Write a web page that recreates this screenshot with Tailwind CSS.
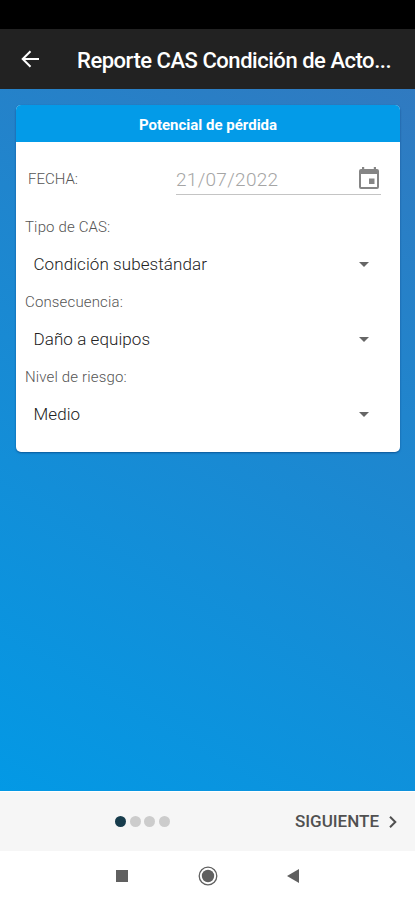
<!DOCTYPE html>
<html lang="es">
<head>
    <meta charset="UTF-8">
    <meta name="viewport" content="width=device-width, initial-scale=1.0">
    <title>Reporte CAS</title>
    <script src="https://cdn.jsdelivr.net/npm/@tailwindcss/browser@4"></script>
</head>
<body class="bg-white font-['Roboto',sans-serif]">

    <div class="w-full h-[900px] flex flex-col overflow-hidden">
        <!-- Status bar -->
        <div class="h-[29px] bg-black shrink-0"></div>

        <header class="h-[60px] bg-[#222222] flex items-center shrink-0 pl-[21px]">
            <svg class="w-[18px] h-[18px] mr-[38px] shrink-0" viewBox="0 0 18 18" fill="none" stroke="#ffffff" stroke-width="2">
                <path d="M18 9H2M9.5 1.2L1.7 9l7.8 7.8"/>
            </svg>
            <h1 class="text-[22px] font-medium text-white whitespace-nowrap pt-[3px] tracking-[-0.47px]">Reporte CAS Condición de Acto...</h1>
        </header>

        <main class="flex-1 px-4 pt-4 bg-[linear-gradient(30deg,#0399e5,#307ac0)]">
            <div class="w-[384px] h-[347px] bg-white rounded-[5px] overflow-hidden shadow-[0_1px_2px_rgba(0,50,110,0.6)]">
                <div class="h-[37px] bg-[#039be8] flex items-center justify-center">
                    <h2 class="text-[15px] font-bold text-white pt-[3px]">Potencial de pérdida</h2>
                </div>

                <div class="flex justify-between items-center pl-3 pr-[19px] h-[53px]">
                    <label class="text-[15px] font-light text-[#555555] pt-[21px]">FECHA:</label>
                    <div class="w-[205px] h-[32px] mt-[21px] border-b border-[#c4c4c4] flex items-center justify-between">
                        <span class="text-[19px] font-light text-[#a5a5a5] tracking-[0.3px] pt-1">21/07/2022</span>
                        <svg class="w-5 h-[22px] mr-0.5 mb-0.5" viewBox="0 0 20 22">
                            <path fill="#858585" fill-rule="evenodd" d="M3 0h2.2v2h9.6V0H17v2h1a2 2 0 0 1 2 2v16a2 2 0 0 1-2 2H2a2 2 0 0 1-2-2V4a2 2 0 0 1 2-2h1zM2 7v13h16V7zM10 11.5h5.5V17H10z"/>
                        </svg>
                    </div>
                </div>

                <div class="pl-[9px] pr-[31px] pt-[13px]">
                    <div class="h-[75px]">
                        <p class="h-[38px] leading-[38px] text-[15px] font-light text-[#555555] tracking-[0.15px]">Tipo de CAS:</p>
                        <div class="h-[37px] pl-[8.5px] flex items-center justify-between">
                            <span class="text-[17px] font-[350] text-[#222222] tracking-[0.08px]">Condición subestándar</span>
                            <svg class="w-2.5 h-[5px]" viewBox="0 0 10 5"><path fill="#666666" d="M0 0h10L5 5z"/></svg>
                        </div>
                    </div>
                    <div class="h-[75px]">
                        <p class="h-[38px] leading-[38px] text-[15px] font-light text-[#555555] tracking-[0.15px]">Consecuencia:</p>
                        <div class="h-[37px] pl-[8.5px] flex items-center justify-between">
                            <span class="text-[17px] font-[350] text-[#222222] tracking-[0.08px]">Daño a equipos</span>
                            <svg class="w-2.5 h-[5px]" viewBox="0 0 10 5"><path fill="#666666" d="M0 0h10L5 5z"/></svg>
                        </div>
                    </div>
                    <div class="h-[75px]">
                        <p class="h-[38px] leading-[38px] text-[15px] font-light text-[#555555] tracking-[0.15px]">Nivel de riesgo:</p>
                        <div class="h-[37px] pl-[8.5px] flex items-center justify-between">
                            <span class="text-[17px] font-[350] text-[#222222] tracking-[0.08px]">Medio</span>
                            <svg class="w-2.5 h-[5px]" viewBox="0 0 10 5"><path fill="#666666" d="M0 0h10L5 5z"/></svg>
                        </div>
                    </div>
                </div>
            </div>
        </main>

        <!-- Stepper -->
        <div class="h-[60px] bg-[#f6f6f6] border-t border-white flex items-center justify-between shrink-0 pl-[115px] pr-[18px]">
            <div class="flex gap-[3.6px]">
                <span class="size-[11px] rounded-full bg-[#173c4c]"></span>
                <span class="size-[11px] rounded-full bg-[#cccccc]"></span>
                <span class="size-[11px] rounded-full bg-[#cccccc]"></span>
                <span class="size-[11px] rounded-full bg-[#cccccc]"></span>
            </div>
            <div class="flex items-center gap-[10px]">
                <span class="text-[17px] font-medium text-[#505050]">SIGUIENTE</span>
                <svg class="w-2 h-3" viewBox="0 0 8 12" fill="none" stroke="#505050" stroke-width="2">
                    <path d="M1 .8L6.3 6 1 11.2"/>
                </svg>
            </div>
        </div>

        <!-- Android navigation bar -->
        <nav class="h-[49px] bg-white flex items-center shrink-0 pl-[116px]">
            <span class="size-3 bg-[#606060]"></span>
            <svg class="size-[20px] ml-[70px]" viewBox="0 0 20 20">
                <circle cx="10" cy="10" r="8.8" fill="none" stroke="#606060" stroke-width="1.3"/>
                <circle cx="10" cy="10" r="6.2" fill="#606060"/>
            </svg>
            <svg class="w-3 h-[14px] ml-[69px]" viewBox="0 0 12 14"><path fill="#606060" d="M12 0v14L0 7z"/></svg>
        </nav>
    </div>

</body>
</html>
